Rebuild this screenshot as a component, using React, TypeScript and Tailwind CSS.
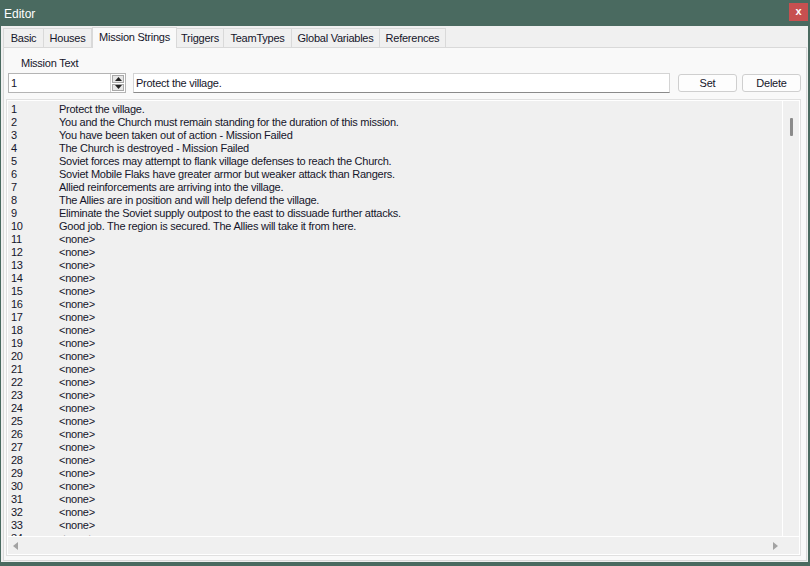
import React from "react";

const texts = [
  "Protect the village.",
  "You and the Church must remain standing for the duration of this mission.",
  "You have been taken out of action - Mission Failed",
  "The Church is destroyed - Mission Failed",
  "Soviet forces may attempt to flank village defenses to reach the Church.",
  "Soviet Mobile Flaks have greater armor but weaker attack than Rangers.",
  "Allied reinforcements are arriving into the village.",
  "The Allies are in position and will help defend the village.",
  "Eliminate the Soviet supply outpost to the east to dissuade further attacks.",
  "Good job. The region is secured. The Allies will take it from here.",
];

const rows = Array.from({ length: 34 }, (_, i) => ({
  n: i + 1,
  t: i < texts.length ? texts[i] : "<none>",
}));

const tabs = [
  { label: "Basic", w: "w-[41px]" },
  { label: "Houses", w: "w-[48px]" },
  { label: "Mission Strings", w: "w-[85px]", active: true },
  { label: "Triggers", w: "w-[47px]" },
  { label: "TeamTypes", w: "w-[68px]" },
  { label: "Global Variables", w: "w-[88px]" },
  { label: "References", w: "w-[66px]" },
];

export default function App() {
  return (
    <div className="w-[810px] h-[566px] bg-[#4a6a60] flex flex-col font-['Liberation_Sans',Arial,sans-serif] overflow-hidden">
      {/* title bar */}
      <div className="h-[26px] flex items-start justify-between pl-[4px] pr-[2px]">
        <span className="text-white text-[12px] leading-[14px] mt-[7px]">Editor</span>
        <div className="w-[19px] h-[18px] mt-[3px] bg-[#c75050] flex items-center justify-center text-white text-[11px] font-bold leading-none pb-[2px]">
          x
        </div>
      </div>

      {/* client */}
      <div className="flex-1 ml-[1px] mr-[2px] mb-[4px] bg-[#f0f0f0] flex flex-col text-[11px] tracking-[-0.25px] text-[#15152a]">
        {/* tabs */}
        <div className="h-[21px] flex items-end pl-[2px] relative z-10">
          {tabs.map((t) =>
            t.active ? (
              <div
                key={t.label}
                className={`${t.w} h-[21px] mb-[-1px] bg-[#f9f9f9] border border-b-0 border-[#d9d9d9] flex items-start justify-center pt-[3px] leading-[13px]`}
              >
                {t.label}
              </div>
            ) : (
              <div
                key={t.label}
                className={`${t.w} h-[19px] bg-[#f0f0f0] border border-b-0 border-l-0 first:border-l border-[#d9d9d9] flex items-start justify-center pt-[3px] leading-[13px]`}
              >
                {t.label}
              </div>
            )
          )}
        </div>

        {/* tab page */}
        <div className="flex-1 ml-[2px] mr-[1px] mb-[1px] bg-[#f9f9f9] border border-[#d9d9d9] flex flex-col">
          <div className="pl-[17px] mt-[9px] leading-[13px]">Mission Text</div>
          <div className="flex items-start mt-[3px] h-[20px]">
            {/* numeric up-down */}
            <div className="ml-[4px] w-[118px] h-[20px] bg-white border border-[#b4b4b4] flex">
              <div className="flex-1 pl-[2px] leading-[18px]">1</div>
              <div className="w-[15px] flex flex-col border-l border-[#d0d0d0] p-[1px] gap-[1px]">
                <div className="flex-1 bg-[#e6e6e6] border border-[#a8a8a8] flex items-center justify-center">
                  <svg width="7" height="4" viewBox="0 0 7 4">
                    <path d="M0 4 L3.5 0 L7 4 Z" fill="#222" />
                  </svg>
                </div>
                <div className="flex-1 bg-[#e6e6e6] border border-[#a8a8a8] flex items-center justify-center">
                  <svg width="7" height="4" viewBox="0 0 7 4">
                    <path d="M0 0 L7 0 L3.5 4 Z" fill="#222" />
                  </svg>
                </div>
              </div>
            </div>
            {/* text input */}
            <div className="ml-[7px] w-[537px] h-[20px] bg-white border border-[#d4d4d4] border-b-[#8a8a8a] pl-[2px] leading-[18px]">
              Protect the village.
            </div>
            <button className="ml-[8px] mt-[1px] w-[59px] h-[18px] rounded-[3px] border border-[#cfcfcf] bg-[#fdfdfd] leading-[16px] text-center">
              Set
            </button>
            <button className="ml-[5px] mt-[1px] w-[59px] h-[18px] rounded-[3px] border border-[#cfcfcf] bg-[#fdfdfd] leading-[16px] text-center">
              Delete
            </button>
          </div>

          {/* list box */}
          <div className="ml-[2px] mt-[6px] w-[795px] h-[457px] border border-[#e0e0e0] flex">
            <div className="flex-1 border border-white flex flex-col bg-[#f0f0f0]">
              <div className="flex-1 flex min-h-0">
                <div className="flex-1 overflow-hidden pt-[2px] border-r border-white">
                  {rows.map((r) => (
                    <div key={r.n} className="flex h-[13px] leading-[13px] whitespace-nowrap">
                      <span className="w-[51px] pl-[3px]">{r.n}</span>
                      <span>{r.t}</span>
                    </div>
                  ))}
                </div>
                <div className="w-[16px] relative">
                  <div className="absolute left-[7px] top-[17px] w-[3px] h-[18px] bg-[#8a8a8a] rounded-[1px]" />
                </div>
              </div>
              <div className="h-[18px] border-t border-white flex items-center justify-between pl-[5px] pr-[21px]">
                <svg width="5" height="8" viewBox="0 0 5 8">
                  <path d="M5 0 L0 4 L5 8 Z" fill="#a3a3a3" />
                </svg>
                <svg width="5" height="8" viewBox="0 0 5 8">
                  <path d="M0 0 L5 4 L0 8 Z" fill="#a3a3a3" />
                </svg>
              </div>
            </div>
          </div>
        </div>
      </div>
    </div>
  );
}
